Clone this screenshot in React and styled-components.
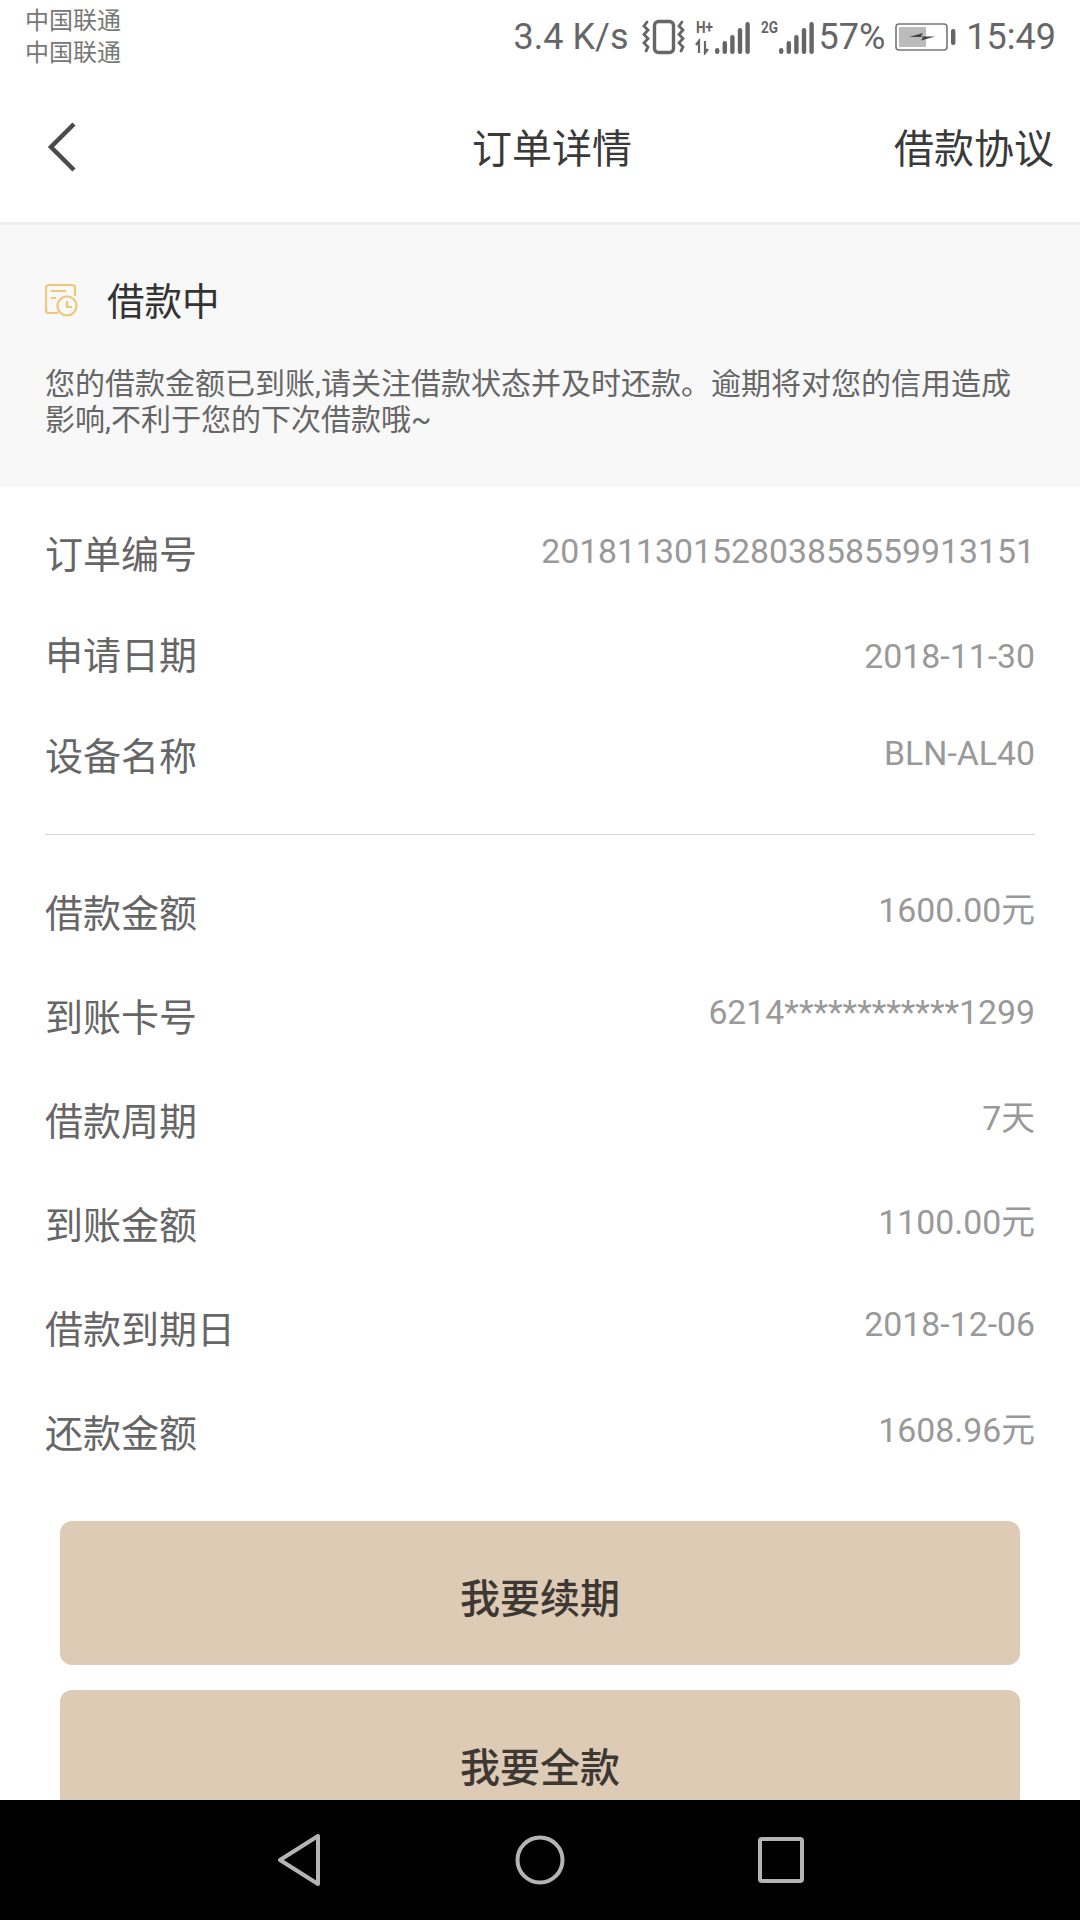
import React from "react";
import styled, { createGlobalStyle } from "styled-components";

const Global = createGlobalStyle`
  html, body { margin: 0; padding: 0; background: #fff; }
  * { box-sizing: border-box; }
`;
const SANS = `Roboto, "Noto Sans CJK SC", sans-serif`;

const Page = styled.div`
  width: 1080px; height: 1920px; display: flex; flex-direction: column;
  overflow: hidden; background: #fff; font-family: ${SANS};
`;
const Content = styled.div`flex: 1; min-height: 0; overflow: hidden;`;

const StatusBar = styled.div`
  height: 74px; padding: 5px 24px 0 25px; display: flex; justify-content: space-between;
`;
const Carriers = styled.div`font-size: 24px; line-height: 32px; color: #777;`;
const StatusRight = styled.div`
  display: flex; align-items: center; height: 64px; font-size: 36px; color: #666;
`;
const Speed = styled.span`margin-right: 13px;`;
const Percent = styled.span`margin: 0 10px 0 4px;`;
const Clock = styled.span`margin-left: 10px;`;
const IconGap = styled.span`display: flex; margin-left: ${p => p.$left}px;`;

const NavBar = styled.div`
  height: 151px; padding: 0 26px 3px 46px; display: flex; align-items: center; position: relative;
  border-bottom: 3px solid #eeeeee; color: #3a3a3a; font-size: 40px;
`;
const NavTitle = styled.div`position: absolute; left: 472px; top: 52px; line-height: 48px;`;
const NavLink = styled.div`margin-left: auto; padding-top: 7px; line-height: 48px;`;

const Banner = styled.div`
  height: 262px; background: #f8f8f8; padding: 57px 45px 0;
`;
const BannerHead = styled.div`display: flex; align-items: center; gap: 29px; height: 40px;`;
const BannerIcon = styled.span`display: flex; margin-bottom: 3px;`;
const BannerTitle = styled.div`font-size: 37.5px; color: #333; line-height: 40px;`;
const BannerText = styled.div`
  margin-top: 44px; font-size: 30px; line-height: 36px; color: #666; width: 980px;
`;

const Group = styled.div`padding: ${p => p.$top || 0}px 45px 0;`;
const Row = styled.div`
  height: ${p => p.$h}px; display: flex; align-items: center; justify-content: space-between;
`;
const Label = styled.div`font-size: 38px; color: #666;`;
const Value = styled.div`
  font-size: 33.8px; color: #999;
  padding-bottom: ${p => p.$lift || 0}px; padding-top: ${p => p.$drop || 0}px;
`;
const Divider = styled.div`height: 1px; background: #d4d4d4; margin: 30px 45px 23px;`;

const Actions = styled.div`display: flex; flex-direction: column; gap: 25px; padding: 39px 60px 0;`;
const ActionButton = styled.div`
  height: 144px; border-radius: 12px; background: #decbb5; color: #3d3833;
  display: flex; align-items: center; justify-content: center; font-size: 40px; font-weight: 500;
  padding-top: 5px;
`;

const SoftBar = styled.div`
  height: 120px; flex: none; background: #000; display: flex; align-items: center; justify-content: center;
`;
const SoftKey = styled.div`width: 241px; display: flex; justify-content: center;`;

const Vibrate = () => (
  <svg width="45" height="36" viewBox="0 0 45 36" fill="none" stroke="#666" strokeLinecap="round">
    <rect x="12.5" y="2.5" width="19" height="31" rx="4" strokeWidth="3.4" />
    <path d="M5 3l-3 4 4 4-4 4.5 4 4-4 4.5 4 4-2 4" strokeWidth="2.8" />
    <path d="M40 3l-3 4 4 4-4 4.5 4 4-4 4.5 4 4-2 4" strokeWidth="2.8" />
  </svg>
);
const Bars = ({ heights }) => (
  <g fill="#666">
    {heights.map((h, i) => <rect key={i} x={i * 7.6} y={33 - h} width="4.4" height={h} rx="2.2" />)}
  </g>
);
const TinyLabel = styled.text`
  font-size: 17px; font-weight: 700; fill: #666; font-family: Roboto, sans-serif;
`;
const SignalH = () => (
  <svg width="55" height="36" viewBox="0 0 55 36">
    <TinyLabel transform="translate(1 14) scale(.8 1)">H+</TinyLabel>
    <path d="M4 34V22l-3 4M10 22v12l3-4" fill="none" stroke="#666" strokeWidth="2.2" />
    <g transform="translate(20 2)"><Bars heights={[6, 13, 19, 26, 32]} /></g>
  </svg>
);
const Signal2G = () => (
  <svg width="54" height="36" viewBox="0 0 54 36">
    <TinyLabel transform="translate(0 14) scale(.8 1)">2G</TinyLabel>
    <g transform="translate(18 2)"><Bars heights={[6, 13, 19, 26, 32]} /></g>
  </svg>
);
const Battery = () => (
  <svg width="61" height="32" viewBox="0 0 61 32">
    <rect x="1" y="3" width="51" height="26" rx="3" fill="none" stroke="#777" strokeWidth="1.6" />
    <rect x="4" y="6" width="27" height="20" fill="#bbb" />
    <path d="M14 16l14-4-2 3.5H40l-14 4 2-3.5z" fill="#444" />
    <rect x="56" y="8" width="4.4" height="16" rx="2" fill="#666" />
  </svg>
);
const Back = () => (
  <svg width="32" height="52" viewBox="0 0 32 52" fill="none" stroke="#4a4a4a" strokeWidth="4.5">
    <path d="M28 3L5 26l23 23" />
  </svg>
);
const OrderIcon = () => (
  <svg width="33" height="34" viewBox="0 0 33 34" fill="none" stroke="#eec777" strokeWidth="2.2">
    <path d="M13 29H4a3 3 0 0 1-3-3V4a3 3 0 0 1 3-3h23a3 3 0 0 1 3 3v8" />
    <path d="M6 7h15M6 14h5" />
    <circle cx="22" cy="22" r="9.5" />
    <path d="M22 17v6h5" />
  </svg>
);

const order = [
  { l: "订单编号", v: "20181130152803858559913151", lift: 1 },
  { l: "申请日期", v: "2018-11-30", drop: 8 },
  { l: "设备名称", v: "BLN-AL40", lift: 1 },
];
const loan = [
  ["借款金额", "1600.00元", 6],
  ["到账卡号", "6214************1299", 3],
  ["借款周期", "7天", 6],
  ["到账金额", "1100.00元", 6],
  ["借款到期日", "2018-12-06", 3],
  ["还款金额", "1608.96元", 6],
];

export default function App() {
  return (
    <Page>
      <Global />
      <Content>
        <StatusBar>
          <Carriers>中国联通<br />中国联通</Carriers>
          <StatusRight>
            <Speed>3.4 K/s</Speed>
            <Vibrate />
            <IconGap $left={8}><SignalH /></IconGap>
            <IconGap $left={11}><Signal2G /></IconGap>
            <Percent>57%</Percent>
            <Battery />
            <Clock>15:49</Clock>
          </StatusRight>
        </StatusBar>
        <NavBar>
          <Back />
          <NavTitle>订单详情</NavTitle>
          <NavLink>借款协议</NavLink>
        </NavBar>
        <Banner>
          <BannerHead>
            <BannerIcon><OrderIcon /></BannerIcon>
            <BannerTitle>借款中</BannerTitle>
          </BannerHead>
          <BannerText>您的借款金额已到账,请关注借款状态并及时还款。逾期将对您的信用造成影响,不利于您的下次借款哦~</BannerText>
        </Banner>
        <Group $top={14}>
          {order.map(({ l, v, lift, drop }) => (
            <Row key={l} $h={101}><Label>{l}</Label><Value $lift={lift} $drop={drop}>{v}</Value></Row>
          ))}
        </Group>
        <Divider />
        <Group>
          {loan.map(([l, v, lift]) => (
            <Row key={l} $h={104}><Label>{l}</Label><Value $lift={lift}>{v}</Value></Row>
          ))}
        </Group>
        <Actions>
          <ActionButton>我要续期</ActionButton>
          <ActionButton>我要全款</ActionButton>
        </Actions>
      </Content>
      <SoftBar>
        <SoftKey>
          <svg width="44" height="52" viewBox="0 0 44 52" fill="none" stroke="#b4b4b4" strokeWidth="4" strokeLinejoin="round">
            <path d="M41 2v48L3 26z" />
          </svg>
        </SoftKey>
        <SoftKey>
          <svg width="50" height="50" viewBox="0 0 50 50" fill="none" stroke="#b4b4b4" strokeWidth="4">
            <circle cx="25" cy="25" r="22.5" />
          </svg>
        </SoftKey>
        <SoftKey>
          <svg width="46" height="46" viewBox="0 0 46 46" fill="none" stroke="#b4b4b4" strokeWidth="4">
            <rect x="2" y="2" width="42" height="42" rx="2" />
          </svg>
        </SoftKey>
      </SoftBar>
    </Page>
  );
}
